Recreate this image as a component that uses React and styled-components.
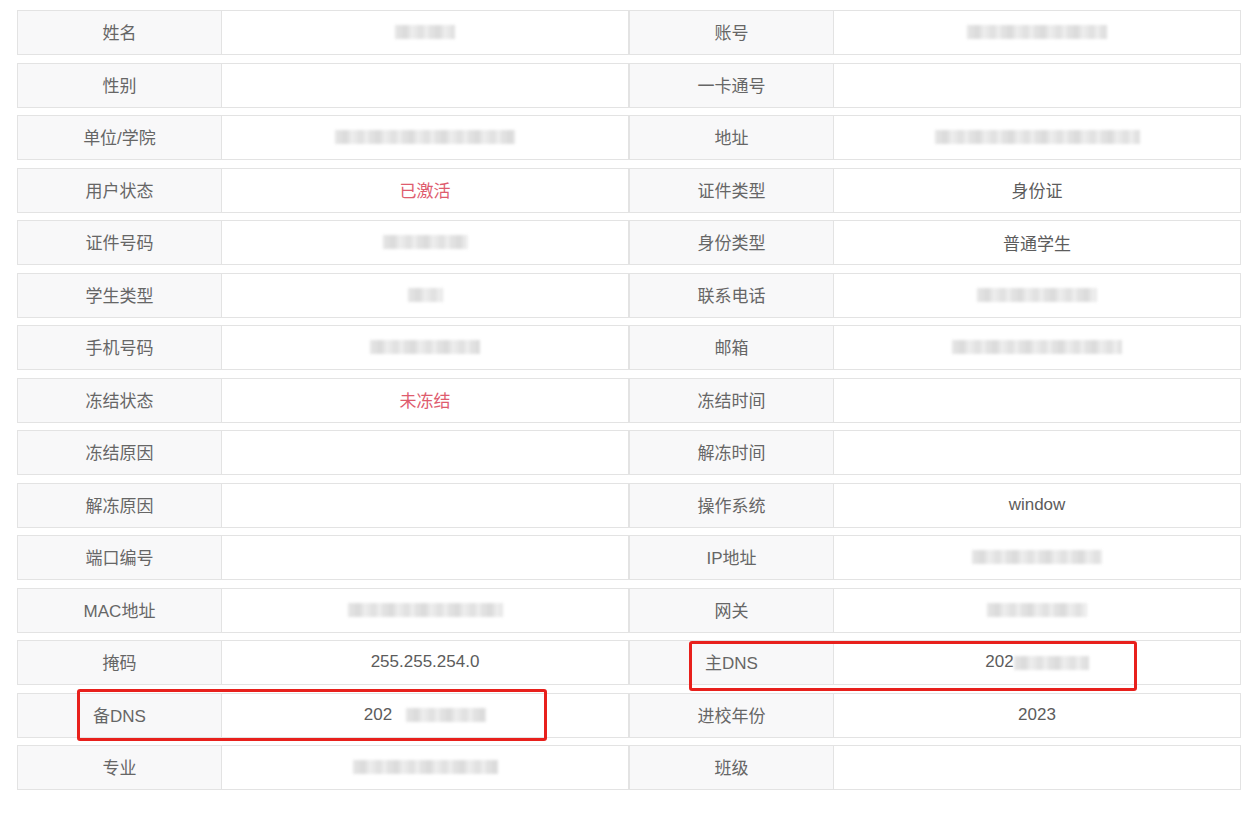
import React from 'react';
import styled, { createGlobalStyle } from 'styled-components';

const GlobalStyle = createGlobalStyle`
  html, body {
    margin: 0;
    padding: 0;
    background: #fff;
  }
  body {
    font-family: "Liberation Sans", "Noto Sans CJK SC", sans-serif;
  }
`;

const Page = styled.div`
  position: relative;
  width: 1248px;
  padding: 10px 7px 0 17px;
  box-sizing: border-box;
`;

const Grid = styled.div`
  display: grid;
  grid-template-columns: 612px 612px;
  row-gap: 7.5px;
`;

const Item = styled.div`
  display: flex;
  height: 45px;
  box-sizing: border-box;
  border: 1px solid #e3e3e3;
`;

const Label = styled.div`
  flex: 0 0 204px;
  display: flex;
  align-items: center;
  justify-content: center;
  padding-bottom: 2px;
  box-sizing: border-box;
  background: #f8f8f9;
  border-right: 1px solid #e3e3e3;
  color: #666;
  font-size: 17px;
`;

const Value = styled.div`
  flex: 1;
  display: flex;
  align-items: center;
  justify-content: center;
  padding-bottom: 1px;
  box-sizing: border-box;
  color: ${(p) => (p.$red ? '#de5c6e' : '#5c5c5c')};
  font-size: 17px;
`;

const Masked = styled.span`
  display: inline-block;
  vertical-align: middle;
  width: ${(p) => p.$w}px;
  height: 14px;
  margin-left: ${(p) => p.$ml || 0}px;
  background: repeating-linear-gradient(
    90deg,
    #e2e2e2 0px,
    #d4d4d4 11px,
    #ececec 17px,
    #dadada 26px,
    #f0f0f0 33px
  );
  filter: blur(1.8px);
  opacity: 0.85;
`;

const Mark = styled.div`
  position: absolute;
  left: ${(p) => p.$x}px;
  top: ${(p) => p.$y}px;
  width: ${(p) => p.$w}px;
  height: ${(p) => p.$h}px;
  box-sizing: border-box;
  border: 3px solid #e8201c;
  border-radius: 3px;
`;

const rows = [
  ['姓名', <Masked $w={60} />, '账号', <Masked $w={140} />],
  ['性别', '', '一卡通号', ''],
  ['单位/学院', <Masked $w={180} />, '地址', <Masked $w={205} />],
  ['用户状态', { red: '已激活' }, '证件类型', '身份证'],
  ['证件号码', <Masked $w={85} />, '身份类型', '普通学生'],
  ['学生类型', <Masked $w={35} />, '联系电话', <Masked $w={120} />],
  ['手机号码', <Masked $w={110} />, '邮箱', <Masked $w={170} />],
  ['冻结状态', { red: '未冻结' }, '冻结时间', ''],
  ['冻结原因', '', '解冻时间', ''],
  ['解冻原因', '', '操作系统', 'window'],
  ['端口编号', '', 'IP地址', <Masked $w={130} />],
  ['MAC地址', <Masked $w={155} />, '网关', <Masked $w={100} />],
  ['掩码', '255.255.254.0', '主DNS', <span>202<Masked $w={75} /></span>],
  ['备DNS', <span>202<Masked $w={80} $ml={14} /></span>, '进校年份', '2023'],
  ['专业', <Masked $w={145} />, '班级', ''],
];

const Cell = ({ label, value }) => {
  const red = value && value.red;
  return (
    <Item>
      <Label>{label}</Label>
      <Value $red={!!red}>{red ? value.red : value}</Value>
    </Item>
  );
};

export default function App() {
  return (
    <Page>
      <GlobalStyle />
      <Grid>
        {rows.map((r, i) => (
          <React.Fragment key={i}>
            <Cell label={r[0]} value={r[1]} />
            <Cell label={r[2]} value={r[3]} />
          </React.Fragment>
        ))}
      </Grid>
      <Mark $x={689} $y={641} $w={448} $h={50} />
      <Mark $x={77} $y={689} $w={470} $h={52} />
    </Page>
  );
}
